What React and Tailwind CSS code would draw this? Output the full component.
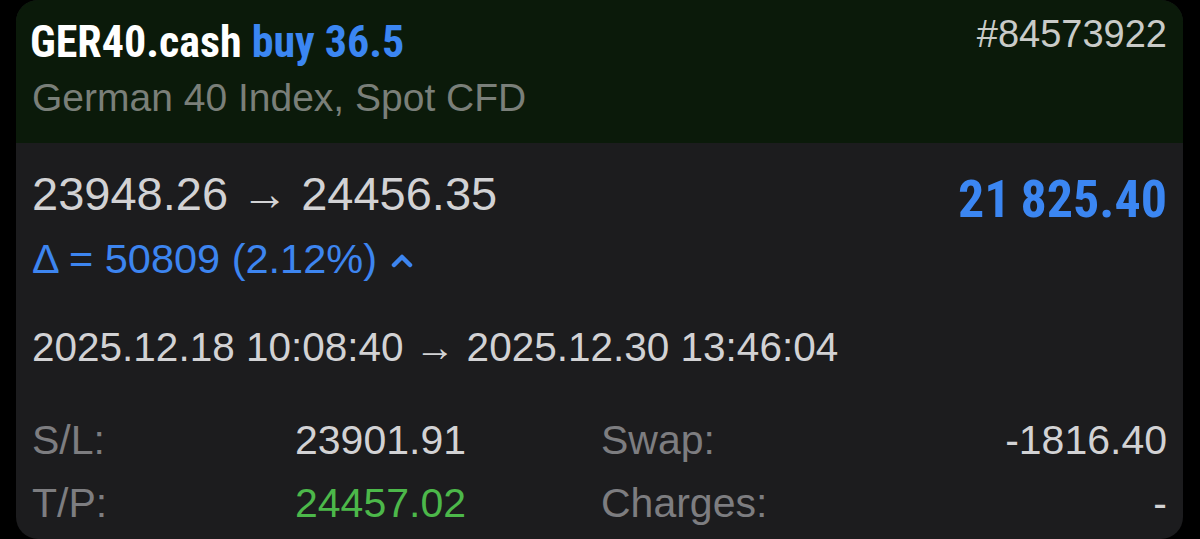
export default function App() {
  const sans = { fontFamily: '"Liberation Sans", Arial, sans-serif' };
  const narrow = { fontFamily: 'Roboto, sans-serif', fontStretch: '75%' };
  return (
    <div className="w-[1200px] h-[539px] bg-black overflow-hidden" style={sans}>
      <div className="ml-[16px] w-[1167px] h-[539px] rounded-[22px] overflow-hidden bg-[#1c1c1e] flex flex-col">
        <div className="h-[143px] shrink-0 bg-[#0b1a0a] flex justify-between pl-[14px] pr-[16px] pt-[10px]">
          <div className="flex flex-col pt-[8px]">
            <div className="text-[44px] leading-[48px] font-bold whitespace-nowrap" style={narrow}>
              <span className="text-white">GER40.cash</span>{' '}
              <span className="text-[#3b86f2]">buy 36.5</span>
            </div>
            <div className="mt-[8px] pl-[2px] text-[39px] leading-[48px] text-[#7a7f79] whitespace-nowrap">German 40 Index, Spot CFD</div>
          </div>
          <div className="text-[38px] leading-[48px] text-[#c9cbc8] whitespace-nowrap">#84573922</div>
        </div>
        <div className="flex flex-col pl-[16px] pr-[16px] pt-[25px]">
          <div className="flex justify-between items-start">
            <div className="flex flex-col">
              <div className="text-[47px] leading-[52px] text-[#d2d2d4] whitespace-nowrap">23948.26 → 24456.35</div>
              <div className="mt-[15px] flex items-center text-[41.5px] leading-[48px] text-[#3d85f0] whitespace-nowrap">
                <span>Δ = 50809 (2.12%)</span>
                <svg className="ml-[14px] mt-[2px]" width="22" height="16" viewBox="0 0 22 16">
                  <polyline points="3,13 11,5 19,13" fill="none" stroke="#3d85f0" strokeWidth="4.5" strokeLinecap="round" strokeLinejoin="round" />
                </svg>
              </div>
            </div>
            <div className="mt-[4px] text-[52px] leading-[56px] font-bold text-[#3b86f2] whitespace-nowrap" style={narrow}>21{'\u2009'}825.40</div>
          </div>
          <div className="mt-[40px] text-[40.5px] leading-[48px] text-[#d2d2d4] whitespace-nowrap">2025.12.18 10:08:40 → 2025.12.30 13:46:04</div>
          <div className="mt-[38px] grid grid-cols-[263px_306px_1fr_auto] text-[41px] leading-[63px] whitespace-nowrap">
            <div className="text-[#7d7d80]">S/L:</div>
            <div className="text-[#d2d2d4]">23901.91</div>
            <div className="text-[#7d7d80]">Swap:</div>
            <div className="text-[#d2d2d4] text-right">-1816.40</div>
            <div className="text-[#7d7d80]">T/P:</div>
            <div className="text-[#4cb84a]">24457.02</div>
            <div className="text-[#7d7d80]">Charges:</div>
            <div className="text-[#d2d2d4] text-right">-</div>
          </div>
        </div>
      </div>
    </div>
  );
}
